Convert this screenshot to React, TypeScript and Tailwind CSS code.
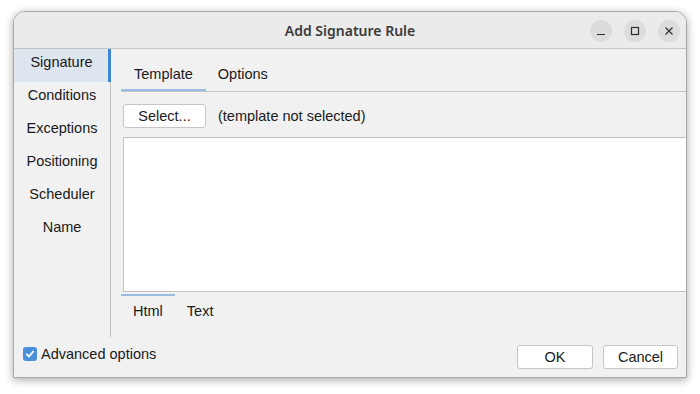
const sideItems = ["Signature", "Conditions", "Exceptions", "Positioning", "Scheduler", "Name"];

function WinButton({ children }: { children: React.ReactNode }) {
  return (
    <div className="flex h-[22px] w-[22px] items-center justify-center rounded-full bg-[#dcdcdc]">
      <svg width="10" height="10" viewBox="0 0 10 10" fill="none" stroke="#2e2e2e" strokeWidth="1.2">
        {children}
      </svg>
    </div>
  );
}

function Button({ label, width }: { label: string; width: string }) {
  return (
    <button
      type="button"
      className={`flex h-[24px] items-center justify-center rounded-[3px] border border-[#c6c6c6] bg-white pt-[1px] text-[14.5px] text-[#1a1a1a] ${width}`}
    >
      {label}
    </button>
  );
}

export default function App() {
  return (
    <div
      className="h-[394px] w-[700px] overflow-hidden bg-white pl-[13px] pt-[11px]"
      style={{ fontFamily: '"Liberation Sans", Arial, sans-serif' }}
    >
      <div className="flex h-[367px] w-[674px] flex-col overflow-hidden rounded-t-[12px] border border-[#a8a8a8] bg-[#f1f1f1] shadow-[0_2px_8px_rgba(0,0,0,0.35)]">
        {/* title bar */}
        <div className="grid h-[37px] shrink-0 grid-cols-[1fr_auto_1fr] items-center border-b border-[#c4c4c4] bg-[#ebebeb]">
          <div />
          <div
            className="pt-[1px] text-[14px] font-semibold text-[#3a3a3a]"
            style={{ fontFamily: '"Noto Sans", "Open Sans", sans-serif' }}
          >
            Add Signature Rule
          </div>
          <div className="flex items-center justify-end gap-[12px] pr-[6px] pt-[1px]">
            <WinButton>
              <path d="M1 8.5h8" />
            </WinButton>
            <WinButton>
              <rect x="1.5" y="1.5" width="7" height="7" />
            </WinButton>
            <WinButton>
              <path d="M1.5 1.5l7 7M8.5 1.5l-7 7" />
            </WinButton>
          </div>
        </div>

        {/* main */}
        <div className="flex h-[288px] shrink-0">
          <div className="w-[97px] shrink-0 border-r border-[#c2c2c2]">
            {sideItems.map((s, i) => (
              <div
                key={s}
                className={`flex h-[33px] items-center justify-center pb-[5px] text-[14.5px] text-[#1a1a1a] ${
                  i === 0 ? "mr-[-1px] border-r-[3px] border-[#3d86d1] bg-[#dde5ee] pl-[1px]" : ""
                }`}
              >
                {s}
              </div>
            ))}
          </div>

          <div className="flex min-w-0 flex-1 flex-col pl-[10px]">
            <div className="flex border-b border-[#c4c4c4] text-[14.5px] text-[#1a1a1a]">
              <div className="border-b-[2px] border-[#98bce2] px-[13px] pb-[6px] pt-[16px] leading-[18px]">Template</div>
              <div className="border-b-[2px] border-transparent px-[12px] pb-[6px] pt-[16px] leading-[18px]">Options</div>
            </div>

            <div className="flex items-center gap-[12px] pl-[2px] pt-[12px]">
              <Button label="Select..." width="w-[83px]" />
              <span className="pt-[1px] text-[14.5px] text-[#1a1a1a]">(template not selected)</span>
            </div>

            <div className="ml-[2px] mr-[-2px] mt-[9px] h-[155px] border border-r-0 border-[#c2c2c2] bg-white" />

            <div className="mt-[2px] flex text-[14.5px] text-[#1a1a1a]">
              <div className="border-t-[2px] border-[#98bce2] px-[12px] pt-[6px] leading-[18px]">Html</div>
              <div className="border-t-[2px] border-transparent px-[12px] pt-[6px] leading-[18px]">Text</div>
            </div>
          </div>
        </div>

        {/* footer */}
        <div className="flex flex-1 items-start justify-between pl-[9px] pr-[8px] pt-[8px]">
          <label className="mt-[-3px] flex h-[24px] items-center gap-[4px] text-[14.5px] leading-[18px] text-[#1a1a1a]">
            <span className="flex h-[14px] w-[14px] items-center justify-center rounded-[3px] bg-[#4a8fdc]">
              <svg width="10" height="10" viewBox="0 0 10 10" fill="none" stroke="white" strokeWidth="1.8" strokeLinecap="round" strokeLinejoin="round">
                <path d="M1.8 5.3l2.2 2.2 4.2-5" />
              </svg>
            </span>
            Advanced options
          </label>
          <div className="flex gap-[10px]">
            <Button label="OK" width="w-[76px]" />
            <Button label="Cancel" width="w-[75px]" />
          </div>
        </div>
      </div>
    </div>
  );
}
